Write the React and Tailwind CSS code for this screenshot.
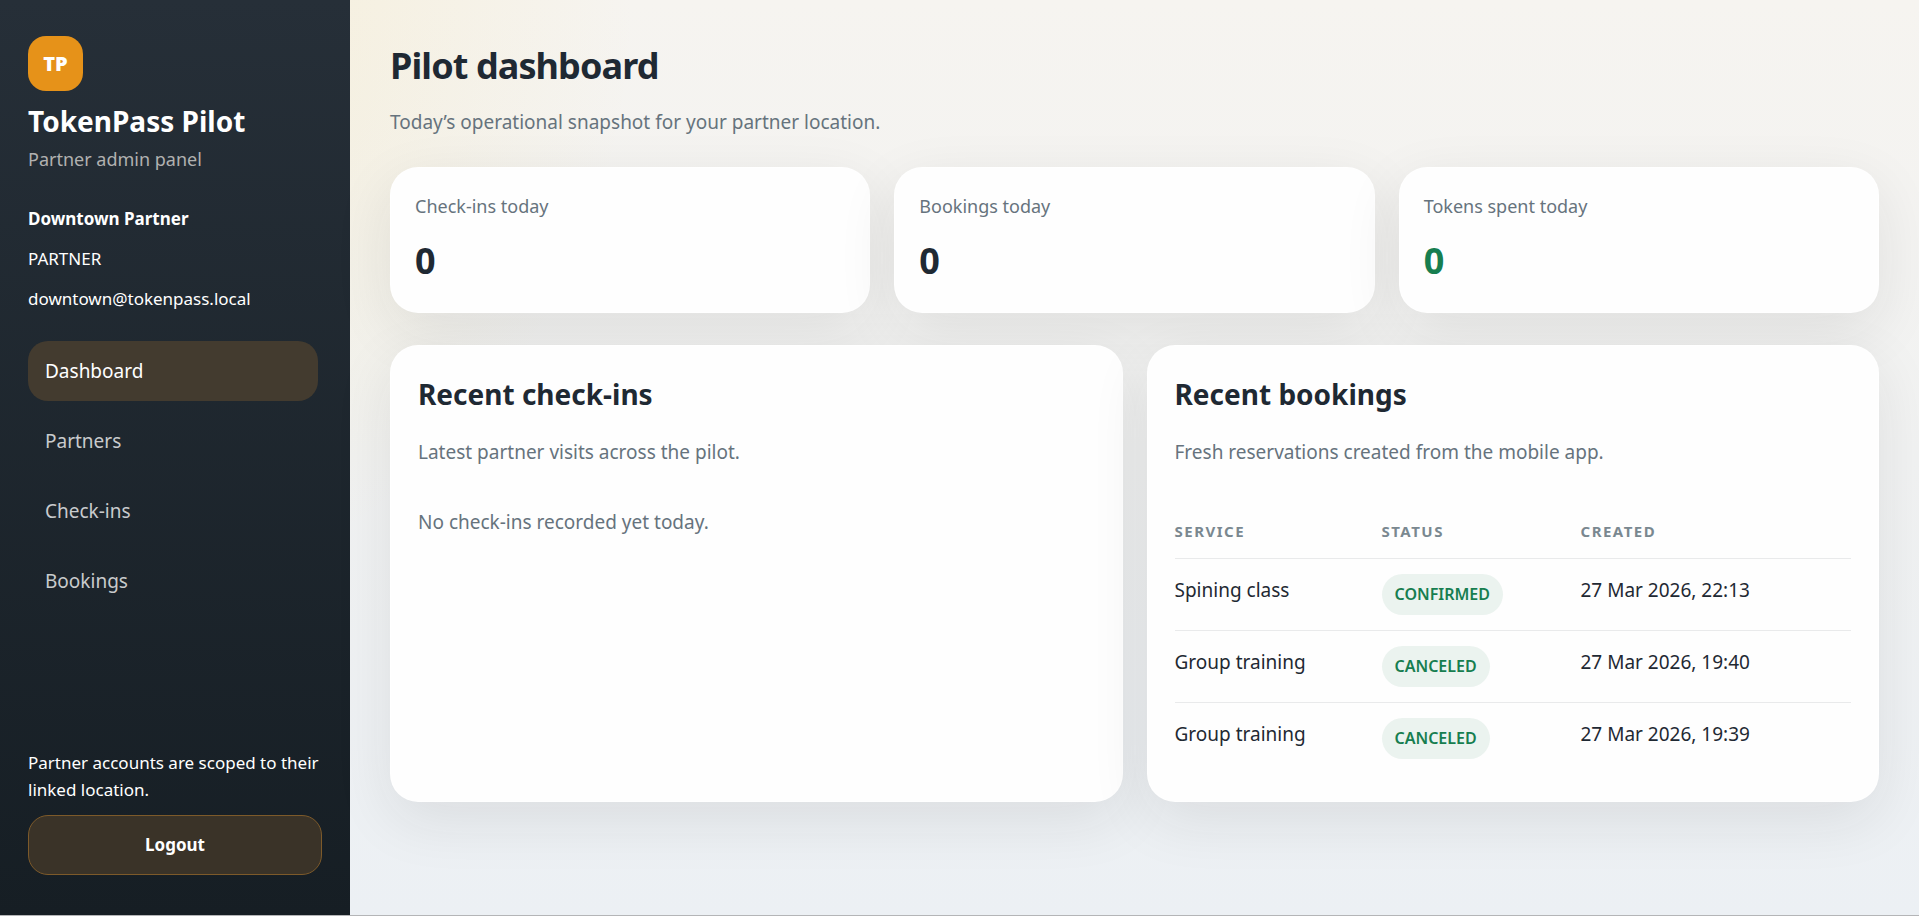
import React, { useState } from 'react'
import clsx from 'clsx'

const navItems = ['Dashboard', 'Partners', 'Check-ins', 'Bookings']

const stats = [
    { label: 'Check-ins today', value: 0 },
    { label: 'Bookings today', value: 0 },
    { label: 'Tokens spent today', value: 0, accent: true },
]

const bookings = [
    { id: 1, service: 'Spining class', status: 'CONFIRMED', created: '27 Mar 2026, 22:13' },
    { id: 2, service: 'Group training', status: 'CANCELED', created: '27 Mar 2026, 19:40' },
    { id: 3, service: 'Group training', status: 'CANCELED', created: '27 Mar 2026, 19:39' },
]

const Sidebar = () => {
    const [active, setActive] = useState('Dashboard')

    return (
        <aside className="flex w-[350px] shrink-0 flex-col justify-between bg-linear-to-b from-[#262f38] to-[#161e24] px-7 pt-9 pb-10 text-white">
            <div>
                {/* Brand */}
                <div className="flex size-[55px] items-center justify-center rounded-[18px] bg-[#e69219] text-xl font-black">
                    TP
                </div>
                <p className="mt-2.5 text-[28px] leading-10 font-bold">TokenPass Pilot</p>
                <p className="mt-1 text-lg leading-7 text-[#b1b1b0]">Partner admin panel</p>

                {/* Signed in user */}
                <div className="mt-8 space-y-3 text-[17px] leading-7">
                    <p className="font-bold">Downtown Partner</p>
                    <p>PARTNER</p>
                    <p>downtown@tokenpass.local</p>
                </div>

                <nav className="mt-7 mr-1 flex flex-col gap-2.5">
                    {navItems.map((item) => (
                        <a
                            key={item}
                            href="#"
                            onClick={() => setActive(item)}
                            className={clsx(
                                'rounded-[20px] px-[17px] py-4 text-[19px] leading-7',
                                active === item ? 'bg-[#433b2f] text-white' : 'text-[#c9cbcd]'
                            )}
                        >
                            {item}
                        </a>
                    ))}
                </nav>
            </div>

            <div>
                <p className="text-[17px] leading-[27px]">Partner accounts are scoped to their linked location.</p>
                <button
                    type="button"
                    className="mt-3 h-15 w-full rounded-[20px] border border-[#7d5a2a] bg-[#3a3328] text-[17px] font-bold text-white"
                >
                    Logout
                </button>
            </div>
        </aside>
    )
}

const StatCard = ({ label, value, accent }) => (
    <div className="rounded-[28px] border border-white/80 bg-[#fefefe] px-6 pt-6 pb-[26px] shadow-[0_18px_60px_rgba(30,30,30,0.09)]">
        <p className="text-lg leading-7 text-[#66737d]">{label}</p>
        <p className={clsx('mt-4 text-[36px] leading-[50px] font-bold', accent ? 'text-[#177e50]' : 'text-[#1f2933]')}>
            {value}
        </p>
    </div>
)

const Panel = ({ title, subtitle, children }) => (
    <section className="rounded-[28px] border border-white/80 bg-[#fefefe] px-[27px] py-[26px] shadow-[0_18px_60px_rgba(30,30,30,0.09)]">
        <h2 className="mt-0.5 text-[28px] leading-10 font-bold">{title}</h2>
        <p className="mt-6 text-[19px] leading-7 text-[#66737d]">{subtitle}</p>
        {children}
    </section>
)

const BookingsTable = () => (
    <table className="mt-10 w-full text-left">
        <thead>
            <tr className="border-b border-[#e9eaeb] text-[15px] leading-7 tracking-widest text-[#7a8890]">
                <th className="w-[207px] pt-[11px] pb-[13px] font-bold">SERVICE</th>
                <th className="w-[199px] pt-[11px] pb-[13px] font-bold">STATUS</th>
                <th className="pt-[11px] pb-[13px] font-bold">CREATED</th>
            </tr>
        </thead>
        <tbody>
            {bookings.map((b) => (
                <tr key={b.id} className="h-[72px] border-b border-[#e9eaeb] align-top text-[19px] leading-7 last:border-b-0">
                    <td className="pt-[17px]">{b.service}</td>
                    <td className="pt-[15px]">
                        <span className="inline-block rounded-full bg-[#ebf3ef] px-[13px] py-[7px] text-base leading-[27px] font-semibold text-[#177e50]">
                            {b.status}
                        </span>
                    </td>
                    <td className="pt-[17px]">{b.created}</td>
                </tr>
            ))}
        </tbody>
    </table>
)

const App = () => {
    return (
        <div className="flex min-h-screen border-b border-[#b4b5b7] bg-[radial-gradient(circle_at_top_left,rgba(245,200,50,0.17),transparent_30%),linear-gradient(180deg,#f6f4f0,#ecf0f4)] font-['Noto_Sans',sans-serif] text-[#1f2933]">
            <Sidebar />

            <main className="min-w-0 flex-1 p-10">
                <h1 className="text-[36px] leading-[52px] font-bold tracking-tight">Pilot dashboard</h1>
                <p className="mt-4 text-[19px] leading-7 text-[#66737d]">Today’s operational snapshot for your partner location.</p>

                <div className="mt-[31px] grid grid-cols-3 gap-6">
                    {stats.map((s) => (
                        <StatCard key={s.label} {...s} />
                    ))}
                </div>

                <div className="mt-8 grid grid-cols-2 gap-6">
                    <Panel title="Recent check-ins" subtitle="Latest partner visits across the pilot.">
                        <p className="mt-[42px] text-[19px] leading-7 text-[#66737d]">No check-ins recorded yet today.</p>
                    </Panel>
                    <Panel title="Recent bookings" subtitle="Fresh reservations created from the mobile app.">
                        <BookingsTable />
                    </Panel>
                </div>
            </main>
        </div>
    )
}

export default App
